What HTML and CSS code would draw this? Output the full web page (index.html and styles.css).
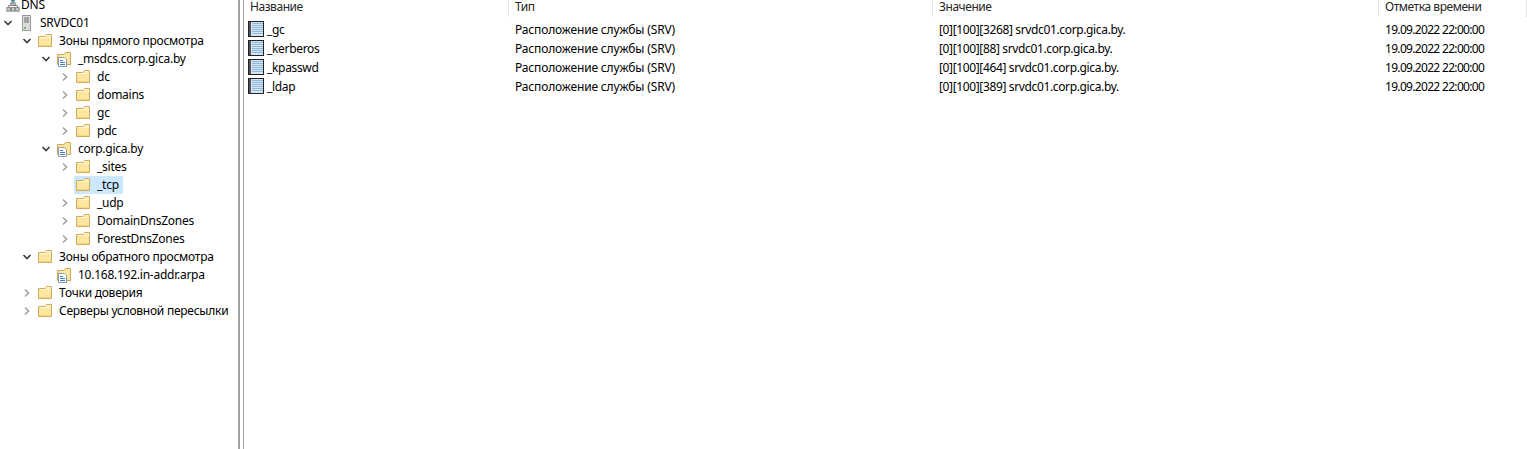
FILE: index.html
```html
<!DOCTYPE html>
<html lang="ru">
  <head>
    <meta charset="UTF-8" />
    <title>DNS</title>
    <link rel="stylesheet" href="styles.css">
  </head>
  <body>
    <svg class="defs" width="0" height="0">
      <defs>
        <symbol id="folder" viewBox="0 0 16 16">
          <path d="M1.5 13.5V3.5H8L9.5 1.5H14.5V13.5z" fill="#fce6a0" stroke="#d0ac5a"/>
          <path d="M9.5 2.5h4v2h-11" fill="none" stroke="#fff6d6"/>
          <path d="M2 12.5h12" stroke="#f6d67f"/>
        </symbol>
        <symbol id="zone" viewBox="0 0 16 16">
          <path d="M1.5 13.5V3.5H8L9.5 1.5H14.5V13.5z" fill="#fce6a0" stroke="#d0ac5a"/>
          <path d="M2.5 6.5h6l2 2v7h-8z" fill="#fff" stroke="#8a9bb0"/>
          <path d="M4 9.5h3M4 11.5h5M4 13.5h5" stroke="#3f7fc4"/>
        </symbol>
        <symbol id="record" viewBox="0 0 16 16">
          <rect x="0.5" y="0.5" width="15" height="15" fill="#d5e5f3" stroke="#222"/>
          <rect x="1" y="1" width="2" height="14" fill="#555"/>
          <path d="M4 2.5h11M4 4.5h11M4 6.5h11M4 8.5h11M4 10.5h11M4 12.5h11" stroke="#8db8dc"/>
        </symbol>
        <symbol id="open" viewBox="0 0 10 10">
          <path d="M1.5 3l3.500 3.500L8.500 3" fill="none" stroke="#404040" stroke-width="1.7"/>
        </symbol>
        <symbol id="closed" viewBox="0 0 10 10">
          <path d="M3 1.500l3.500 3.500L3 8.500" fill="none" stroke="#a6a6a6" stroke-width="1.7"/>
        </symbol>
      </defs>
    </svg>

    <div class="console">
      <div class="tree">
        <div class="node root">
          <svg class="icon" viewBox="0 0 16 16">
            <circle cx="8" cy="2" r="2.500" fill="#3f8f8a"/>
            <path d="M8 5v3M3 11V8.500h10V11" fill="none" stroke="#777"/>
            <rect x="5.500" y="5.500" width="5" height="3" fill="#bbb" stroke="#777"/>
            <rect x="1" y="11" width="4" height="4" fill="#ccc" stroke="#777"/>
            <rect x="6" y="11" width="4" height="4" fill="#ccc" stroke="#777"/>
            <rect x="11" y="11" width="4" height="4" fill="#ccc" stroke="#777"/>
          </svg>
          <span class="label">DNS</span>
        </div>
        <div class="node lvl0">
          <svg class="arrow"><use href="#open"/></svg>
          <svg class="icon" viewBox="0 0 16 16">
            <rect x="4.500" y="0.500" width="8" height="15" fill="#dcdcdc" stroke="#9a9a9a"/>
            <path d="M6 3h5M6 5h5M6 7h5" stroke="#6a6a6a"/>
            <rect x="6" y="12" width="2" height="2" fill="#6fc04a"/>
          </svg>
          <span class="label">SRVDC01</span>
        </div>
        <div class="node lvl1">
          <svg class="arrow"><use href="#open"/></svg>
          <svg class="icon"><use href="#folder"/></svg>
          <span class="label">Зоны прямого просмотра</span>
        </div>
        <div class="node lvl2">
          <svg class="arrow"><use href="#open"/></svg>
          <svg class="icon"><use href="#zone"/></svg>
          <span class="label">_msdcs.corp.gica.by</span>
        </div>
        <div class="node lvl3">
          <svg class="arrow"><use href="#closed"/></svg>
          <svg class="icon"><use href="#folder"/></svg>
          <span class="label">dc</span>
        </div>
        <div class="node lvl3">
          <svg class="arrow"><use href="#closed"/></svg>
          <svg class="icon"><use href="#folder"/></svg>
          <span class="label">domains</span>
        </div>
        <div class="node lvl3">
          <svg class="arrow"><use href="#closed"/></svg>
          <svg class="icon"><use href="#folder"/></svg>
          <span class="label">gc</span>
        </div>
        <div class="node lvl3">
          <svg class="arrow"><use href="#closed"/></svg>
          <svg class="icon"><use href="#folder"/></svg>
          <span class="label">pdc</span>
        </div>
        <div class="node lvl2">
          <svg class="arrow"><use href="#open"/></svg>
          <svg class="icon"><use href="#zone"/></svg>
          <span class="label">corp.gica.by</span>
        </div>
        <div class="node lvl3">
          <svg class="arrow"><use href="#closed"/></svg>
          <svg class="icon"><use href="#folder"/></svg>
          <span class="label">_sites</span>
        </div>
        <div class="node lvl3 selected">
          <span class="arrow"></span>
          <svg class="icon"><use href="#folder"/></svg>
          <span class="label">_tcp</span>
        </div>
        <div class="node lvl3">
          <svg class="arrow"><use href="#closed"/></svg>
          <svg class="icon"><use href="#folder"/></svg>
          <span class="label">_udp</span>
        </div>
        <div class="node lvl3">
          <svg class="arrow"><use href="#closed"/></svg>
          <svg class="icon"><use href="#folder"/></svg>
          <span class="label">DomainDnsZones</span>
        </div>
        <div class="node lvl3">
          <svg class="arrow"><use href="#closed"/></svg>
          <svg class="icon"><use href="#folder"/></svg>
          <span class="label">ForestDnsZones</span>
        </div>
        <div class="node lvl1">
          <svg class="arrow"><use href="#open"/></svg>
          <svg class="icon"><use href="#folder"/></svg>
          <span class="label">Зоны обратного просмотра</span>
        </div>
        <div class="node lvl2">
          <span class="arrow"></span>
          <svg class="icon"><use href="#zone"/></svg>
          <span class="label">10.168.192.in-addr.arpa</span>
        </div>
        <div class="node lvl1">
          <svg class="arrow"><use href="#closed"/></svg>
          <svg class="icon"><use href="#folder"/></svg>
          <span class="label">Точки доверия</span>
        </div>
        <div class="node lvl1">
          <svg class="arrow"><use href="#closed"/></svg>
          <svg class="icon"><use href="#folder"/></svg>
          <span class="label">Серверы условной пересылки</span>
        </div>
      </div>

      <div class="details">
        <div class="list-head">
          <div class="col col-name">Название</div>
          <div class="col col-type">Тип</div>
          <div class="col col-value">Значение</div>
          <div class="col col-time">Отметка времени</div>
        </div>
        <div class="list-row">
          <div class="col col-name"><svg class="rec-icon"><use href="#record"/></svg>_gc</div>
          <div class="col col-type">Расположение службы (SRV)</div>
          <div class="col col-value">[0][100][3268] srvdc01.corp.gica.by.</div>
          <div class="col col-time">19.09.2022 22:00:00</div>
        </div>
        <div class="list-row">
          <div class="col col-name"><svg class="rec-icon"><use href="#record"/></svg>_kerberos</div>
          <div class="col col-type">Расположение службы (SRV)</div>
          <div class="col col-value">[0][100][88] srvdc01.corp.gica.by.</div>
          <div class="col col-time">19.09.2022 22:00:00</div>
        </div>
        <div class="list-row">
          <div class="col col-name"><svg class="rec-icon"><use href="#record"/></svg>_kpasswd</div>
          <div class="col col-type">Расположение службы (SRV)</div>
          <div class="col col-value">[0][100][464] srvdc01.corp.gica.by.</div>
          <div class="col col-time">19.09.2022 22:00:00</div>
        </div>
        <div class="list-row">
          <div class="col col-name"><svg class="rec-icon"><use href="#record"/></svg>_ldap</div>
          <div class="col col-type">Расположение службы (SRV)</div>
          <div class="col col-value">[0][100][389] srvdc01.corp.gica.by.</div>
          <div class="col col-time">19.09.2022 22:00:00</div>
        </div>
      </div>
    </div>
  </body>
</html>
```

FILE: styles.css
```css
html,
body {
  margin: 0;
  height: 100%;
  overflow: hidden;
  background-color: #fff;
}
body {
  font-family: "Noto Sans", "Open Sans", sans-serif;
  font-size: 12px;
  color: #000;
}
.defs {
  display: block;
}
.console {
  display: flex;
  height: 449px;
}
.tree {
  width: 238px;
  flex: none;
  border-right: 2px solid #a0a0a0;
  letter-spacing: -0.25px;
}
.node {
  display: flex;
  align-items: center;
  height: 18px;
  white-space: nowrap;
}
.root {
  height: 10px;
  margin-bottom: 4px;
  padding-left: 6px;
}
.root .icon {
  width: 14px;
  height: 14px;
  margin-left: 0;
}
.root .label {
  margin-left: 0;
  padding: 0 1px;
  line-height: 10px;
}
.lvl0 {
  padding-left: 3px;
}
.lvl1 {
  padding-left: 22px;
}
.lvl2 {
  padding-left: 41px;
}
.lvl3 {
  padding-left: 60px;
}
.arrow {
  width: 10px;
  height: 10px;
  flex: none;
}
.icon {
  width: 16px;
  height: 16px;
  flex: none;
  margin-left: 5px;
}
.label {
  margin-left: 4px;
  padding: 0 2px;
  line-height: 18px;
}
.selected {
  background: linear-gradient(#cce8ff, #cce8ff) 74px 0 / 49px 18px no-repeat;
}
.details {
  flex: 1;
  margin-left: 3px;
  border-left: 1px solid #a0a0a0;
}
.list-head {
  display: flex;
  height: 17px;
  margin-bottom: 3px;
  color: #262626;
  letter-spacing: -0.45px;
}
.list-head .col {
  height: 17px;
  line-height: 14px;
  border-right: 1px solid #e5e5e5;
}
.list-row {
  display: flex;
  height: 19px;
  line-height: 19px;
  white-space: nowrap;
}
.list-row .col-name {
  letter-spacing: -0.33px;
}
.list-row .col-type {
  letter-spacing: -0.16px;
}
.list-row .col-value {
  letter-spacing: -0.36px;
}
.list-row .col-time {
  letter-spacing: -0.68px;
}
.col {
  box-sizing: border-box;
  flex: none;
  padding-left: 6px;
}
.col-name {
  display: flex;
  align-items: flex-start;
  width: 265px;
}
.col-type {
  width: 424px;
}
.col-value {
  width: 446px;
}
.col-time {
  width: 148px;
}
.rec-icon {
  width: 16px;
  height: 16px;
  flex: none;
  margin: 1px 3px 0 -2px;
}
```
